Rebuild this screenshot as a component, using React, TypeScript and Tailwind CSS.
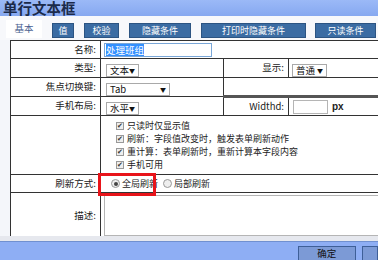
import React from "react";

const font = { fontFamily: '"Noto Sans CJK SC", "Liberation Sans", sans-serif' };

function Sel({ text, w }: { text: string; w: string }) {
  return (
    <div className={`inline-flex items-center justify-between whitespace-nowrap h-[13px] border border-[#a9a9a9] bg-white pl-[3px] pr-[3px] text-[9.5px] leading-[11px] text-[#111] ${w}`}>
      <span>{text}</span>
      <span className="text-[6px] leading-[6px]">▼</span>
    </div>
  );
}

const cell = "border border-[#333] p-0 leading-none";

function Label({ children }: { children: React.ReactNode }) {
  return <td className={`${cell} text-right pr-[4px] text-[9.5px] text-[#222] align-middle whitespace-nowrap`}>{children}</td>;
}

function Check({ text }: { text: string }) {
  return (
    <div className="flex items-center h-[12px] gap-[3px] whitespace-nowrap">
      <span className="w-[8px] h-[8px] border border-[#999] bg-[#eee] text-[7px] leading-[7px] flex items-center justify-center text-[#333]">✔</span>
      <span className="text-[9px] text-[#222] leading-[12px]">{text}</span>
    </div>
  );
}

const btn = "h-[15px] bg-[#3b6ca3] border border-[#2c5482] text-white text-[9px] leading-none flex items-center justify-center whitespace-nowrap";

export default function App() {
  return (
    <div className="w-[378px] h-[260px] overflow-hidden bg-[#f4f6fa] flex flex-col" style={font}>
      <div className="h-[16px] shrink-0 bg-gradient-to-b from-[#9bb9f7] to-[#86a8f0] pl-[3px] flex items-center overflow-visible">
        <span className="text-[14.5px] leading-[16px] font-bold text-[#1b2a4a] whitespace-nowrap">单行文本框</span>
      </div>
      <div className="h-[24px] shrink-0 flex items-end pb-[2px] bg-[#f7f8fb]">
        <div className="ml-[6px] w-[36px] h-[18px] bg-white text-[#4a5f90] text-[9.5px] leading-none flex items-center justify-center">基本</div>
        <div className={`ml-[10px] w-[22px] ${btn}`}>值</div>
        <div className={`ml-[10px] w-[35px] ${btn}`}>校验</div>
        <div className={`ml-[10px] w-[62px] ${btn}`}>隐藏条件</div>
        <div className={`ml-[10px] w-[105px] ${btn}`}>打印时隐藏条件</div>
        <div className={`ml-[9px] w-[61px] ${btn}`}>只读条件</div>
      </div>
      <div className="pl-[10px] h-[196px] shrink-0 overflow-hidden">
        <table className="border-collapse bg-white w-[380px] table-fixed">
          <colgroup>
            <col className="w-[90px]" />
            <col className="w-[123px]" />
            <col className="w-[65px]" />
            <col className="w-[102px]" />
          </colgroup>
          <tbody>
            <tr>
              <Label>名称:</Label>
              <td colSpan={3} className={`${cell} pl-[3px] h-[18px]`}>
                <div className="w-[108px] h-[14px] border border-[#7aa7d8] bg-white flex items-center pl-[1px]">
                  <span className="bg-[#3390ff] text-white text-[9.5px] leading-[12px]">处理班组</span>
                </div>
              </td>
            </tr>
            <tr>
              <Label>类型:</Label>
              <td className={`${cell} pl-[5px] h-[18px]`}><Sel text="文本" w="w-[33px]" /></td>
              <td className={`${cell} text-right pr-[4px] text-[9.5px] text-[#222]`}>显示:</td>
              <td className={`${cell} pl-[3px]`}><Sel text="普通" w="w-[35px]" /></td>
            </tr>
            <tr>
              <Label>焦点切换键:</Label>
              <td className={`${cell} pl-[5px] h-[17px]`}><Sel text="Tab" w="w-[64px]" /></td>
              <td colSpan={2} className={`${cell} border-b-[3px] border-b-[#555]`}></td>
            </tr>
            <tr>
              <Label>手机布局:</Label>
              <td className={`${cell} pl-[5px] h-[19px]`}><Sel text="水平" w="w-[33px]" /></td>
              <td className={`${cell} text-right pr-[4px] text-[9.5px] text-[#222]`}>Widthd:</td>
              <td className={`${cell} pl-[4px]`}>
                <div className="flex items-center gap-[4px]">
                  <div className="w-[35px] h-[14px] border border-[#b5b5b5] bg-white"></div>
                  <span className="text-[10px] font-bold text-[#222]" style={{ fontFamily: '"Liberation Sans", sans-serif' }}>px</span>
                </div>
              </td>
            </tr>
            <tr>
              <td className={`${cell} h-[59px]`}></td>
              <td colSpan={3} className={`${cell} pl-[15px] align-middle`}>
                <div className="flex flex-col gap-[1px]">
                  <Check text="只读时仅显示值" />
                  <Check text="刷新：字段值改变时，触发表单刷新动作" />
                  <Check text="重计算：表单刷新时，重新计算本字段内容" />
                  <Check text="手机可用" />
                </div>
              </td>
            </tr>
            <tr>
              <Label>刷新方式:</Label>
              <td colSpan={3} className={`${cell} pl-[10px] h-[18px] relative`}>
                <div className="flex items-center text-[9px] text-[#222] whitespace-nowrap">
                  <span className="w-[9px] h-[9px] rounded-full border border-[#999] bg-[#eee] flex items-center justify-center mr-[2px]">
                    <span className="w-[4px] h-[4px] rounded-full bg-[#444]"></span>
                  </span>
                  <span>全局刷新</span>
                  <span className="w-[9px] h-[9px] rounded-full border border-[#999] bg-[#eee] ml-[5px] mr-[2px]"></span>
                  <span>局部刷新</span>
                </div>
                <div className="absolute left-[-3px] top-[-2px] w-[58px] h-[23px] border-[3px] border-[#e8141a]"></div>
              </td>
            </tr>
            <tr>
              <Label>描述:</Label>
              <td colSpan={3} className={`${cell} pl-[3px] py-[2px] h-[46px]`}>
                <div className="w-full h-[41px] border border-[#b5b5b5] bg-white"></div>
              </td>
            </tr>
          </tbody>
        </table>
      </div>
      <div className="h-[5px] shrink-0 bg-[#e6e8ee]"></div>
      <div className="flex-1 bg-[#8eaef4] border-t border-[#7090d0] flex items-start pt-[4px] pl-[298px] gap-[6px]">
        <div className="w-[72px] h-[20px] bg-[#7c9ad6] border border-[#3e5f98] text-[9.5px] leading-none text-[#111] flex justify-center pt-[2px]">确定</div>
        <div className="w-[20px] h-[20px] bg-[#7c9ad6] border border-[#3e5f98]"></div>
      </div>
    </div>
  );
}
